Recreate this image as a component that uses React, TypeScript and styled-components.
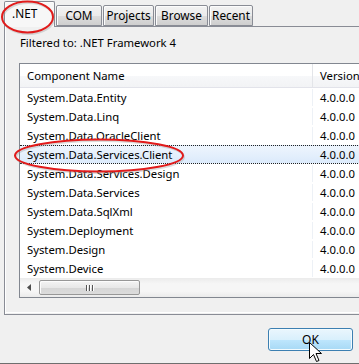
import styled, { createGlobalStyle } from 'styled-components';

const GlobalStyle = createGlobalStyle`
  html, body {
    margin: 0;
    padding: 0;
    background: #f0f0f0;
  }
  body {
    font-family: "Noto Sans", "Open Sans", Arial, sans-serif;
    font-size: 11.3px;
    color: #000;
  }
`;

const components = [
  'System.Data.Entity',
  'System.Data.Linq',
  'System.Data.OracleClient',
  'System.Data.Services.Client',
  'System.Data.Services.Design',
  'System.Data.Services',
  'System.Data.SqlXml',
  'System.Deployment',
  'System.Design',
  'System.Device',
];

const tabs = [
  { label: '.NET', width: 51 },
  { label: 'COM', width: 46 },
  { label: 'Projects', width: 51 },
  { label: 'Browse', width: 53 },
  { label: 'Recent', width: 44 },
];

const Dialog = styled.div`
  position: relative;
  width: 359px;
  height: 363px;
  overflow: hidden;
  background: #f0f0f0;
  border-bottom: 1px solid #6e6e6e;
`;

const TabStrip = styled.div`
  display: flex;
  align-items: flex-end;
  height: 26px;
  padding-left: 4px;
  position: relative;
  z-index: 1;
`;

const Tab = styled.div<{ $active?: boolean; $width: number }>`
  box-sizing: border-box;
  width: ${({ $width }) => $width}px;
  height: ${({ $active }) => ($active ? '26px' : '21px')};
  margin-bottom: ${({ $active }) => ($active ? '-1px' : '0')};
  margin-right: 1px;
  padding: ${({ $active }) => ($active ? '3px 0 0 7px' : '0')};
  border: 1px solid #898c95;
  border-bottom: ${({ $active }) => ($active ? 'none' : '1px solid #898c95')};
  border-radius: 2px 2px 0 0;
  background: ${({ $active }) =>
    $active
      ? '#f7f7f7'
      : 'linear-gradient(#f2f2f2 0%, #ebebeb 50%, #dddddd 51%, #cfcfcf 100%)'};
  box-shadow: inset 1px 1px 0 #fcfcfc;
  display: flex;
  justify-content: ${({ $active }) => ($active ? 'flex-start' : 'center')};
  align-items: ${({ $active }) => ($active ? 'flex-start' : 'center')};
  font-size: 11.8px;
  line-height: 17px;
  white-space: nowrap;
`;

const Panel = styled.div`
  box-sizing: border-box;
  margin-left: 4px;
  width: 420px;
  height: 289px;
  border: 1px solid #898c95;
  border-right: none;
  box-shadow: inset 1px 0 0 #fff, inset 0 -1px 0 #f0f0f0, inset 0 -2px 0 #fff;
  padding: 8px 0 0 15px;
`;

const FilterLabel = styled.div`
  height: 16px;
  line-height: 16px;
`;

const ListView = styled.div`
  margin: 12px 0 0 -1px;
  width: 420px;
  border: 1px solid #828790;
  border-right: none;
  background: #fff;
`;

const ColumnRow = styled.div`
  display: grid;
  grid-template-columns: 293px 1fr;
  height: 19px;
  line-height: 19px;
`;

const HeaderRow = styled(ColumnRow)`
  height: 23px;
  line-height: 23px;
  background: linear-gradient(#ffffff 0%, #ffffff 50%, #f7f8fa 51%, #f2f3f5 100%);
  border-bottom: 1px solid #e2e3ea;
`;

const HeaderCell = styled.div<{ $divider?: boolean }>`
  padding-left: 7px;
  border-right: ${({ $divider }) => ($divider ? '1px solid #e3e5e9' : 'none')};
  white-space: nowrap;
`;

const Row = styled(ColumnRow)<{ $selected?: boolean }>`
  box-sizing: border-box;
  background: ${({ $selected }) =>
    $selected ? 'linear-gradient(#eef5fd, #dbeafb)' : 'transparent'};
  border-top: 1px dotted ${({ $selected }) => ($selected ? '#222' : 'transparent')};
  border-bottom: 1px dotted ${({ $selected }) => ($selected ? '#222' : 'transparent')};
  line-height: 17px;
`;

const Cell = styled.div<{ $divider?: boolean }>`
  padding-left: 7px;
  border-right: ${({ $divider }) => ($divider ? '1px solid #edf1f6' : 'none')};
  white-space: nowrap;
`;

const ScrollBar = styled.div`
  height: 19px;
  display: flex;
  align-items: center;
  background: linear-gradient(#ebebeb, #f6f6f6 30%, #f6f6f6 70%, #ebebeb);
`;

const ArrowButton = styled.div`
  width: 19px;
  height: 17px;
  display: flex;
  align-items: center;
  justify-content: center;
`;

const Thumb = styled.div`
  box-sizing: border-box;
  width: 101px;
  height: 15px;
  border: 1px solid #979797;
  border-radius: 2px;
  background: linear-gradient(#f4f4f4 0%, #e8e8e8 50%, #d5d5d5 51%, #dcdcdc 100%);
  box-shadow: inset 1px 1px 0 #fcfcfc;
  display: flex;
  align-items: center;
  justify-content: center;
  gap: 2px;
`;

const Grip = styled.span`
  width: 1px;
  height: 6px;
  background: #555;
  box-shadow: 1px 0 0 #fff;
`;

const Footer = styled.div`
  display: flex;
  justify-content: flex-end;
  padding: 13px 6px 0 0;
`;

const OkButton = styled.button`
  box-sizing: border-box;
  width: 85px;
  height: 23px;
  font: inherit;
  font-size: 12px;
  color: #000;
  border: 1px solid #3c7fb1;
  border-radius: 3px;
  background: linear-gradient(#eaf6fd 0%, #d9f0fc 50%, #bee6fd 51%, #a7d9f5 100%);
  box-shadow: inset 0 0 0 1px #f3fbfe;
  padding: 0;
  line-height: 19px;
`;

const Overlay = styled.svg`
  position: absolute;
  left: 0;
  top: 0;
  pointer-events: none;
  z-index: 5;
`;

export default function App() {
  return (
    <>
      <GlobalStyle />
      <Dialog>
        <TabStrip>
          {tabs.map((t, i) => (
            <Tab key={t.label} $active={i === 0} $width={t.width}>
              {t.label}
            </Tab>
          ))}
        </TabStrip>
        <Panel>
          <FilterLabel>Filtered to: .NET Framework 4</FilterLabel>
          <ListView>
            <HeaderRow>
              <HeaderCell $divider>Component Name</HeaderCell>
              <HeaderCell>Version</HeaderCell>
            </HeaderRow>
            {components.map((c, i) => (
              <Row key={c} $selected={i === 3}>
                <Cell $divider={i !== 3}>{c}</Cell>
                <Cell>4.0.0.0</Cell>
              </Row>
            ))}
            <ScrollBar>
              <ArrowButton>
                <svg width="5" height="7" viewBox="0 0 5 7">
                  <path d="M4 0 L0 3.5 L4 7 Z" fill="#4d4d4d" />
                </svg>
              </ArrowButton>
              <Thumb>
                <Grip />
                <Grip />
                <Grip />
              </Thumb>
            </ScrollBar>
          </ListView>
        </Panel>
        <Footer>
          <OkButton>OK</OkButton>
        </Footer>

        <Overlay width="359" height="364" viewBox="0 0 359 364">
          <ellipse cx="27.5" cy="17" rx="25.5" ry="15.5" fill="none" stroke="#9a9a9a" strokeOpacity="0.35" strokeWidth="2" transform="translate(1 1.5)" />
          <ellipse cx="27.5" cy="17" rx="25.5" ry="15.5" fill="none" stroke="#e11b1b" strokeWidth="2" />
          <ellipse cx="99" cy="155.5" rx="84" ry="16" fill="none" stroke="#9a9a9a" strokeOpacity="0.35" strokeWidth="2" transform="translate(1 1.5)" />
          <ellipse cx="99" cy="155.5" rx="84" ry="16" fill="none" stroke="#e11b1b" strokeWidth="2" />
          <path
            d="M309.5 342.5 L309.5 358.5 L313.5 354.5 L316.5 361.5 L319 360.5 L316 353.5 L321.5 353.5 Z"
            fill="#fff"
            stroke="#000"
            strokeWidth="1"
            strokeLinejoin="miter"
          />
        </Overlay>
      </Dialog>
    </>
  );
}
